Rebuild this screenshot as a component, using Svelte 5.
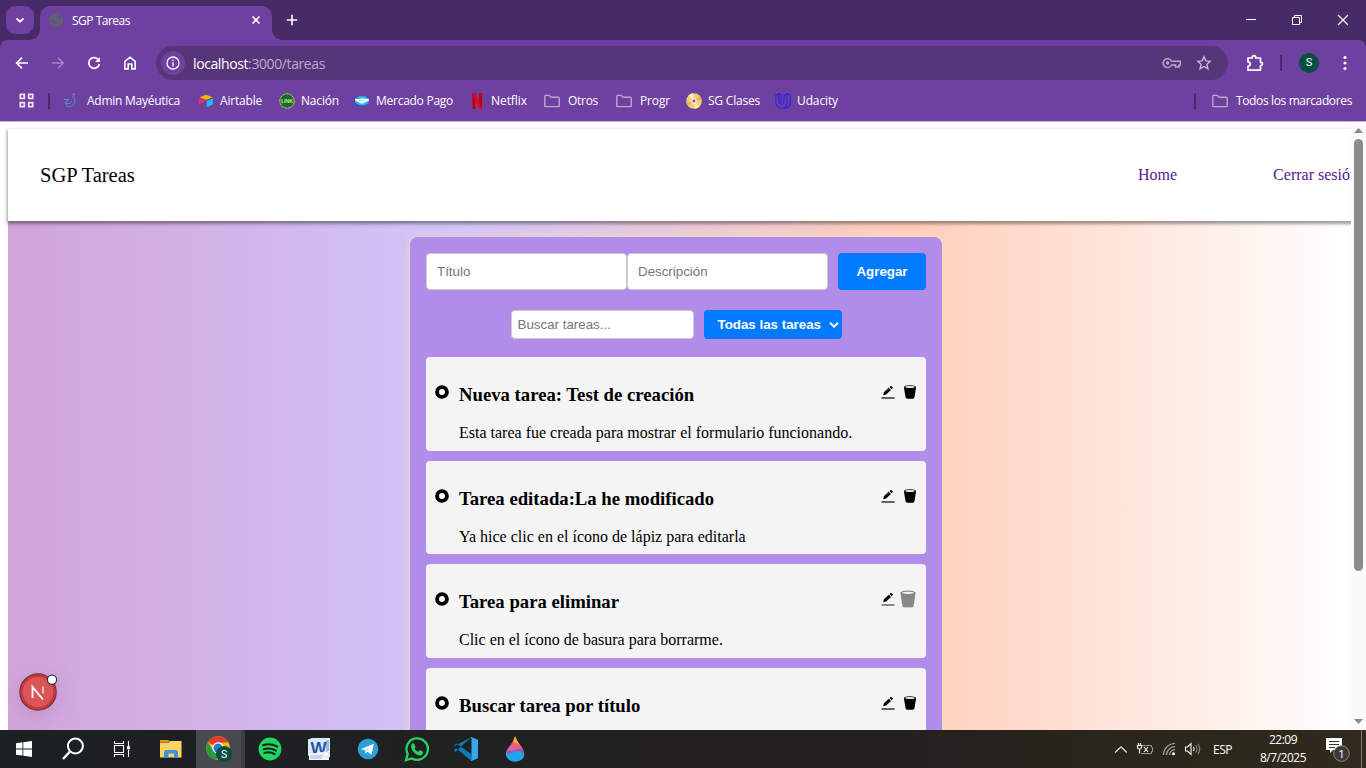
<script>
  const bookmarks = [
    { id: 'admin', label: 'Admin Mayéutica', w: 135, tw: 93 },
    { id: 'airtable', label: 'Airtable', w: 81, tw: 42 },
    { id: 'link', label: 'Nación', w: 75, tw: 38 },
    { id: 'mp', label: 'Mercado Pago', w: 115, tw: 77 },
    { id: 'netflix', label: 'Netflix', w: 75, tw: 36 },
    { id: 'folder', label: 'Otros', w: 72, tw: 30 },
    { id: 'folder', label: 'Progr', w: 70, tw: 30 },
    { id: 'disc', label: 'SG Clases', w: 89, tw: 52 },
    { id: 'udacity', label: 'Udacity', w: 70, tw: 41 }
  ];
  const tasks = [
    { title: 'Nueva tarea: Test de creación', text: 'Esta tarea fue creada para mostrar el formulario funcionando.' },
    { title: 'Tarea editada:La he modificado', text: 'Ya hice clic en el ícono de lápiz para editarla' },
    { title: 'Tarea para eliminar', text: 'Clic en el ícono de basura para borrarme.', hover: true },
    { title: 'Buscar tarea por título', text: 'Usá la barra de búsqueda.' }
  ];
  // Shrinks or widens the tracking so that a label takes exactly its slot.
  function fit(node, width) {
    const n = node.textContent.length;
    const natural = node.getBoundingClientRect().width;
    node.style.letterSpacing = (width - natural) / n + 'px';
  }
</script>

{#snippet folder()}
  <svg width="16" height="16" viewBox="0 0 16 16" fill="none" stroke="#b9a8c9" stroke-width="1.4"><path d="M.8 12.8V3.2q0-.8.8-.8h3.7l1.9 1.9h7.1q.9 0 .9.9v7.6q0 .8-.8.8H1.6q-.8 0-.8-.9z" /></svg>
{/snippet}

{#snippet bookmarkIcon(id)}
  {#if id === 'folder'}
    {@render folder()}
  {:else if id === 'admin'}
    <svg width="16" height="16" viewBox="0 0 16 16" fill="none"><path d="M1 6.5l4.7.2-3.4 3.8q1.7 4.7 6.2 2.8Q14 10 10.500 3.500M10 4l.4-3.500 2 1M2 10.700l5-.3 2-2.500" stroke="#5d8fd0" stroke-width="1" /><path d="M4 14.500q9 2.500 10.500-8" stroke="#584fa5" stroke-width="1" /></svg>
  {:else if id === 'airtable'}
    <svg width="16" height="16" viewBox="0 0 16 16"><path d="M1.500 4.300L8 1.800l6.700 2.500L8 6.900z" fill="#fcb400" /><path d="M8.700 8l6.200-2.400v6L8.700 14z" fill="#18bfff" /><path d="M1 5.500L7.300 8 1 12z" fill="#f82b60" /></svg>
  {:else if id === 'link'}
    <svg width="16" height="16" viewBox="0 0 16 16"><circle cx="8" cy="8" r="7.200" fill="#086b4c" stroke="#c2cf28" stroke-dasharray="3 .6" /><text x="8" y="10.200" text-anchor="middle" font-family="Liberation Sans" font-weight="bold" font-size="5.500" fill="#e0df27" textLength="12">LINK</text></svg>
  {:else if id === 'mp'}
    <svg width="16" height="16" viewBox="0 0 16 16"><ellipse cx="8" cy="8" rx="7.600" ry="5.300" fill="#1268b8" /><ellipse cx="8" cy="7.700" rx="7.100" ry="4.700" fill="#25b5f1" /><path d="M1 5.700q3.500 1 7-.4 3.500 1.400 7 .4l-.5 2.200q-2.700.4-4.300 2-2.200 1.300-4.400 0Q4.200 8.300 1.400 7.900z" fill="#fff" /><path d="M5 8l3-1 3 2" fill="none" stroke="#a9c9df" stroke-width=".7" /></svg>
  {:else if id === 'netflix'}
    <svg width="16" height="16" viewBox="0 0 16 16"><path d="M3.500 0h3v16h-3zM10 0h3v16h-3z" fill="#b20710" /><path d="M3.500 0h3L13 16h-3z" fill="#e50914" /></svg>
  {:else if id === 'disc'}
    <svg width="16" height="16" viewBox="0 0 16 16"><circle cx="8" cy="8" r="7.800" fill="#f7cb76" /><path d="M8 8L2.500 2.500A7.800 7.800 0 017 .3zM8 8l5.500 5.500a7.800 7.800 0 01-4.500 2.200z" fill="#fff0b9" /><path d="M8 8L.4 10A7.800 7.800 0 002 13zM8 8l7.600-2A7.800 7.800 0 0014 3z" fill="#f0ad48" /><circle cx="8" cy="8" r="2.700" fill="#fff1d4" /><circle cx="8" cy="8" r="1.400" fill="#7348a0" /></svg>
  {:else}
    <svg width="16" height="16" viewBox="0 0 16 16" fill="none" stroke="#2820ef" stroke-width="1.100"><path d="M.8 2.500L4 .7v7.600q0 3 2.600 3 1.900 0 2.400-2V2.500L12 .7l3.300 1.500v7.300q0 6-7.200 6Q.8 14.500.8 9.500zM12 .7v9q0 3.500-3.600 5.600M4 .7L6 2v7.500" /></svg>
  {/if}
{/snippet}

<div class="screen">
  <div class="tabstrip">
    <div class="tabsearch"><svg width="12" height="12" viewBox="0 0 12 12" fill="none" stroke="#fff" stroke-width="1.800"><path d="M2.500 4.300L6 7.700l3.500-3.400" /></svg></div>
    <div class="tab">
      <svg class="globe" width="14" height="14" viewBox="0 0 14 14"><circle cx="7" cy="7" r="6.900" fill="#5f6469" /><path d="M2 6q2 .1 3 1.200 1.100.5 2.100.3 1.300.4.8 1.700-.9.600-1.100 1.600-.5 1.200-1.700 1Q1.800 10.500 2 6zM6.700 1.800q-.1 1.900 1.500 1.600.2 1.700 2 1.800l.7 1.100 1.400.3q.1-3.100-2.300-4.500-1.600-.8-3.300-.3z" fill="#6f42a3" /></svg>
      <span class="tabtitle" use:fit={58}>SGP Tareas</span>
      <svg class="close" width="10" height="10" viewBox="0 0 10 10" stroke="#fff" stroke-width="1.600"><path d="M1.500 1.500l7 7M8.500 1.500l-7 7" /></svg>
    </div>
    <svg class="plus" width="12" height="12" viewBox="0 0 12 12" stroke="#fff" stroke-width="1.600"><path d="M6 .8v10.400M.8 6h10.400" /></svg>
    <div class="winctl">
      <svg width="12" height="12" viewBox="0 0 12 12" stroke="#fff"><path d="M1 5.500h10" /></svg>
      <svg width="12" height="12" viewBox="0 0 12 12" fill="none" stroke="#fff"><path d="M1.500 3.500h7v7h-7zM3.500 3.500v-2h7v7h-2" /></svg>
      <svg width="12" height="12" viewBox="0 0 12 12" stroke="#fff" stroke-width="1.200"><path d="M1 1l10 10M11 1L1 11" /></svg>
    </div>
  </div>

  <div class="toolbar">
    <div class="navs">
      <svg width="16" height="16" viewBox="0 0 16 16" fill="none" stroke="#fff" stroke-width="1.700"><path d="M14 8H3M8 2.700L2.700 8 8 13.300" /></svg>
      <svg width="16" height="16" viewBox="0 0 16 16" fill="none" stroke="#a283c4" stroke-width="1.500"><path d="M2 8h11M8 2.700L13.300 8 8 13.300" /></svg>
      <svg width="16" height="16" viewBox="0 0 16 16" fill="none" stroke="#fff" stroke-width="1.800"><path d="M13.300 9a5.300 5.300 0 11-1.500-4.800" /><path d="M13.900 1.900v5H9z" fill="#fff" stroke="none" /></svg>
      <svg width="16" height="16" viewBox="0 0 16 16" fill="none" stroke="#fff" stroke-width="1.600"><path d="M2.800 6.500L8 2.200l5.200 4.300v7.400H9.800V9H6.200v4.900H2.800z" /></svg>
    </div>
    <div class="omnibox">
      <div class="info"><svg width="14" height="14" viewBox="0 0 14 14" fill="none" stroke="#fff" stroke-width="1.300"><circle cx="7" cy="7" r="6" /><path d="M7 6.200v4.200M7 3.500v1.400" /></svg></div>
      <span class="url" use:fit={132}><b>localhost</b>:3000/tareas</span>
      <svg class="key" width="20" height="14" viewBox="0 0 20 14" fill="none" stroke="#b6a7c6" stroke-width="1.500"><path d="M9.500 5.200A4.400 4.400 0 109.500 9h4v2h3.500V9H18.300V5.200z" /><circle cx="5.600" cy="7" r="1.700" fill="#b6a7c6" stroke="none" /></svg>
      <svg width="16" height="16" viewBox="0 0 16 16" fill="none" stroke="#c5b9d1" stroke-width="1.400"><path d="M8 1.700l1.850 4.200 4.500.4-3.400 3 1 4.500L8 11.450 4.050 13.800l1-4.500-3.400-3 4.500-.4z" /></svg>
    </div>
    <div class="tools">
      <svg width="18" height="18" viewBox="0 0 18 18"><path d="M2 4h4.300V3.300a1.700 1.700 0 013.400 0V4h4.800v4.300h.4a1.600 1.600 0 010 3.200h-.4v4.700H2v-4a2.200 2.200 0 000-4.400z" fill="none" stroke="#fff" stroke-width="1.700" stroke-linejoin="round" /></svg>
      <i class="sep"></i>
      <div class="avatar">S</div>
      <svg width="4" height="16" viewBox="0 0 4 16" fill="#fff"><circle cx="2" cy="2.500" r="1.600" /><circle cx="2" cy="8" r="1.600" /><circle cx="2" cy="13.500" r="1.600" /></svg>
    </div>
  </div>

  <div class="bookmarks">
    <svg width="15" height="15" viewBox="0 0 15 15" fill="none" stroke="#eee5f5" stroke-width="1.700"><path d="M1.300 1.300h4v4h-4zM9.700 1.300h4v4h-4zM1.300 9.700h4v4h-4zM9.700 9.700h4v4h-4z" /></svg>
    <i class="sep first"></i>
    {#each bookmarks as b}
      <div class="bm" class:fold={b.id === 'folder'} style="width:{b.w}px">{@render bookmarkIcon(b.id)}<span use:fit={b.tw}>{b.label}</span></div>
    {/each}
    <div class="allbm"><i class="sep"></i>{@render folder()}<span use:fit={116}>Todos los marcadores</span></div>
  </div>

  <div class="viewport">
    <div class="page">
      <header>
        <div class="brand">SGP Tareas</div>
        <nav><span>Home</span><span>Cerrar sesión</span></nav>
      </header>
      <main>
        <section class="card">
          <div class="form">
            <input placeholder="Título" /><input placeholder="Descripción" />
            <button>Agregar</button>
          </div>
          <div class="filters">
            <input placeholder="Buscar tareas..." />
            <div class="select"><span>Todas las tareas</span><svg width="10" height="8" viewBox="0 0 10 8" fill="none" stroke="#fff" stroke-width="2"><path d="M1 1.700l4 4 4-4" /></svg></div>
          </div>
          <div class="list">
            {#each tasks as t}
              <article>
                <svg class="ring" width="14" height="14" viewBox="0 0 14 14"><circle cx="7" cy="7" r="4.900" fill="#fff" stroke="#000" stroke-width="3.900" /></svg>
                <div class="body"><h3>{t.title}</h3><p>{t.text}</p></div>
                <div class="actions">
                  <svg width="14" height="14" viewBox="0 0 14 14"><path d="M2.200 10.300l.7-3 4.900-4.600 2.200 2.200-4.900 4.700zM8.500 2L10 .700l2 2-1.300 1.500z" /><path d="M.5 12.400h13v1.200H.5z" fill={t.hover ? '#444' : '#000'} /></svg>
                  <svg class="trash" class:hover={t.hover} width="14" height="14" viewBox="0 0 14 14"><path d="M.9 2.200C.9.900 3.500.2 7 .2s6.100.7 6.100 2l-1.600 9.900q-.2 1.700-1.700 1.700H4.200q-1.500 0-1.700-1.700z" /><ellipse cx="7" cy="2" rx="4.700" ry=".9" fill="#f4f4f4" /></svg>
                </div>
              </article>
            {/each}
          </div>
        </section>
      </main>
    </div>
    <div class="scroll">
      <svg width="9" height="5" viewBox="0 0 9 5"><path d="M0 5L4.500 0 9 5z" fill="#8b8b8b" /></svg>
      <div class="thumb"></div>
      <svg class="down" width="9" height="5" viewBox="0 0 9 5"><path d="M0 0l4.500 5L9 0z" fill="#8b8b8b" /></svg>
    </div>
    <div class="dev"><svg width="40" height="42" viewBox="0 0 40 42"><circle cx="19" cy="22" r="18.800" fill="#5c3b42" /><circle cx="19" cy="22" r="17.800" fill="#cc3439" /><circle cx="19" cy="22" r="15.200" fill="#d9555a" /><path d="M13.500 28V17L24 29.500" fill="none" stroke="#fff" stroke-width="1.800" /><path d="M24 16.500v7" stroke="#f6d6d8" stroke-width="1.600" /><circle cx="33" cy="9.700" r="4.600" fill="#fff" stroke="#333" stroke-width="1.200" /></svg></div>
  </div>

  <div class="taskbar">
    <div class="tb"><svg width="16" height="16" viewBox="0 0 16 16" fill="#fff"><path d="M0 2.200l6.500-.9v6.200H0zM7.300 1.200L16 0v7.500H7.300zM0 8.400h6.500v6.200L0 13.700zM7.300 8.400H16V16l-8.700-1.200z" /></svg></div>
    <div class="tb"><svg width="24" height="24" viewBox="0 0 24 24" fill="none" stroke="#fff" stroke-width="2"><circle cx="14.400" cy="9" r="7.500" /><path d="M9 14.500L2 22" stroke-width="2.400" /></svg></div>
    <div class="tb"><svg width="18" height="16" viewBox="0 0 18 16" fill="none" stroke="#fff" stroke-width="1.100"><path d="M1.500 0v2.500h9V0M1.500 4.500h9v7h-9zM1.500 16v-2.500h9V16M15.500 0v5M15.500 8.500V16" /><path d="M14 5.200h3v3h-3z" fill="#fff" stroke="none" /></svg></div>
    <div class="tb wide"><svg width="22" height="18" viewBox="0 0 22 18"><path d="M0 0h8.500l1.500 2H0z" fill="#d99a14" /><path d="M0 2.500h9L10 1h11.500v16.500H0z" fill="#fcd462" /><path d="M4 18v-6.500l1.500-1.500h11L18 11.500V18h-4v-4.500H8.500V18z" fill="#3d93d5" /></svg></div>
    <div class="tb active"><svg width="26" height="26" viewBox="0 0 26 26"><circle cx="12" cy="12" r="11.800" fill="#fbc112" /><path d="M12 12L1.800 6A11.800 11.800 0 0122.300 6.500H12z" fill="#e33b2e" /><path d="M1.800 6A11.800 11.800 0 0010.500 23.700L16.700 14.700 7 14.500z" fill="#269b47" /><circle cx="12" cy="12" r="5.700" fill="#fff" /><circle cx="12" cy="12" r="4.500" fill="#2878e8" /><circle cx="18" cy="18" r="8" fill="#064e40" /><text x="18" y="22" text-anchor="middle" font-family="Roboto" font-size="10.500" fill="#fff">S</text></svg></div>
    <div class="tb"><svg width="24" height="24" viewBox="0 0 24 24"><circle cx="12" cy="12" r="11.400" fill="#1ed760" /><path d="M5 8.200q7.500-2.200 14.300 1.400M5.700 12.200q6.500-1.800 12.300 1.400M6.300 15.900q5.500-1.500 10.400 1.200" fill="none" stroke="#18221b" stroke-width="2" stroke-linecap="round" /></svg></div>
    <div class="tb"><svg width="22" height="22" viewBox="0 0 22 22"><path d="M0 1.500L4 0h18v19H4l-4-1.500z" fill="#dfe8f5" /><path d="M18 2h3v16h-3z" fill="#a4b8d9" /><text x="10.500" y="15.500" text-anchor="middle" font-family="Liberation Sans" font-weight="bold" font-size="17" fill="#1d59a8">W</text><path d="M1 16l20-3v9H1z" fill="#f3f6fb" /><path d="M2 18h12M2 20h12" stroke="#9eb5d6" /><path d="M16 13l5.500 2-3 4.500-4-2z" fill="#fff" stroke="#b3c4dc" stroke-width=".6" /></svg></div>
    <div class="tb"><svg width="22" height="22" viewBox="0 0 22 22"><circle cx="11" cy="11" r="10.300" fill="#2b9fd9" /><path d="M4 11L16.800 5.700l-2.200 11-4.300-3-2 2-.4-3.500z" fill="#fff" /><path d="M8.200 12.300l6.600-4.500-4.800 5-1.700 2.600z" fill="#b9dcef" /></svg></div>
    <div class="tb"><svg width="26" height="26" viewBox="0 0 26 26"><path d="M2 24l1.700-6A10.700 10.700 0 118 22.400z" fill="none" stroke="#25d366" stroke-width="2.300" /><path d="M8.200 7.500l1.700-.2 1.700 3.600-1.200 1.600q1.300 2.400 3.900 3.300l1.500-1.700 3.300 1.600q0 3.500-3.600 3.700-4.700-.6-7.700-5.800Q6.300 10 8.200 7.500z" fill="#25d366" /></svg></div>
    <div class="tb"><svg width="24" height="24" viewBox="0 0 24 24"><path d="M17.500 0L1.200 15l-1-1.200v-1L2 11l15.500 13v-6.700L2.300 6.500.2 8.200v1z" fill="#0879bd" /><path d="M17.500 0L24 2.800v18.400L17.500 24l-1-.8q1 .1 1-1V2q0-1.200-1-1.100z" fill="#35a7ed" /></svg></div>
    <div class="tb"><svg width="20" height="26" viewBox="0 0 20 26"><path d="M10.200.5Q12 6 16.500 11q6 9-.5 13-6 3.500-12 0-6.500-5 0-13Q8.500 6.500 10.200.5z" fill="#1ba7ea" /><path d="M10.200.5Q12 6 16.500 11q3 4.500 2.300 8Q14 13 9 16q-5 3.500-7.700.5Q1 14.500 4 11 8.500 6.500 10.200.5z" fill="#9459bd" /><path d="M10.200.5Q12 6 16.500 11l1.500 3q-5-2-9 0-4 2-6.800-.2Q8.500 7 10.200.5z" fill="#ee5c87" /><path d="M10.200.5Q12 6 14.500 8.500 9 7 8 5z" fill="#ffb000" /></svg></div>
    <div class="tray">
      <svg width="14" height="9" viewBox="0 0 14 9" fill="none" stroke="#e9e9e9" stroke-width="1.200"><path d="M1.200 7.500L7 1.800l5.800 5.700" /></svg>
      <svg width="18" height="14" viewBox="0 0 18 14" fill="none" stroke="#eee"><path d="M1.500 3.500h4v2q0 1.500-2 1.500t-2-1.500zM2.500 1v2.500M4.500 1v2.500M3.500 7v4.500M8 5l4 5M12 5l-4 5" stroke-width="1.200" /><path d="M6 3.500h9.500v2h1v4h-1v2H5" stroke="#999" /></svg>
      <svg width="14" height="14" viewBox="0 0 14 14" fill="none" stroke="#aaa" stroke-width="1.200"><path d="M1.500 13A11.500 11.500 0 0113 1.500M4.500 13A8.500 8.500 0 0113 4.700M7.500 13A5.500 5.500 0 0113 7.600" /><circle cx="11.500" cy="11.800" r="1.500" fill="#fff" stroke="none" /></svg>
      <svg width="18" height="14" viewBox="0 0 18 14" fill="none" stroke="#fff" stroke-width="1.100"><path d="M1.500 5h2L7 1.500v11L3.500 9h-2z" /><path d="M9.500 5q1.200 2 0 4" /><path d="M11.700 3.300q2.500 3.700 0 7.400M14 1.800q3.500 5.200 0 10.400" stroke="#888" /></svg>
      <span class="esp" use:fit={19}>ESP</span>
      <div class="clock"><span use:fit={28}>22:09</span><span use:fit={46}>8/7/2025</span></div>
      <svg class="notif" width="26" height="26" viewBox="0 0 26 26"><path d="M1 2h16v12H8l-3 3v-3H1z" fill="#fff" /><path d="M4 5.500h10M4 8.500h10M4 11.500h6" stroke="#333" stroke-width="1.200" /><circle cx="16.500" cy="17.500" r="7.800" fill="#3b3b3b" stroke="#8a8a8a" /><text x="16.500" y="21.700" text-anchor="middle" font-family="Open Sans" font-size="11.500" fill="#fff">1</text></svg>
    </div>
    <i class="peek"></i>
  </div>
</div>

<style>
  :global(body) { margin: 0; overflow: hidden; }
  .screen { width: 1366px; height: 768px; display: flex; flex-direction: column; overflow: hidden; background: #fff; font-family: "Open Sans", "Noto Sans", sans-serif; font-size: 12px; color: #fff; }
  .screen :global(*) { box-sizing: border-box; }
  svg { display: block; flex: none; }
  span { white-space: nowrap; }
  .tabstrip { height: 40px; flex: none; background: #472b66; display: flex; align-items: center; padding-left: 6px; }
  .tabsearch { width: 28px; height: 28px; border-radius: 9px; background: #6e41a1; display: grid; place-items: center; }
  .tab { position: relative; margin: 6px 0 0 6px; width: 232px; height: 34px; background: #6e41a1; border-radius: 10px 10px 0 0; display: flex; align-items: center; padding: 0 11px 6px 9px; }
  .tab::before, .tab::after { content: ""; position: absolute; bottom: 0; width: 10px; height: 10px; }
  .tab::before { left: -10px; background: radial-gradient(circle at 0 0, #472b66 9.500px, #6e41a1 10px); }
  .tab::after { right: -10px; background: radial-gradient(circle at 100% 0, #472b66 9.500px, #6e41a1 10px); }
  .tabtitle { margin-left: 9px; }
  .close { margin-left: auto; }
  .plus { margin-left: 14px; }
  .winctl { margin-left: auto; display: flex; gap: 34px; padding-right: 17px; }
  .toolbar { height: 46px; flex: none; background: linear-gradient(#472b66, #472b66) 0 0 / 100% 8px no-repeat, #6e41a1; display: flex; align-items: center; position: relative; }
  .toolbar::before { content: ""; position: absolute; inset: 0; background: #6e41a1; border-radius: 8px 8px 0 0; }
  .toolbar > * { position: relative; }
  .navs { display: flex; gap: 20px; padding-left: 14px; width: 156px; }
  .omnibox { width: 1072px; height: 34px; border-radius: 17px; background: #563579; display: flex; align-items: center; padding: 0 16px 0 5px; }
  .info { width: 24px; height: 24px; border-radius: 50%; background: #6e41a1; display: grid; place-items: center; margin-right: 8px; }
  .url { font-size: 14px; color: #bba8cf; }
  .url b { font-weight: 400; color: #fff; }
  .key { margin: 0 14px 0 auto; }
  .tools { flex: 1; display: flex; align-items: center; padding-left: 18px; }
  .sep { width: 2px; height: 16px; background: #4b2c6b; }
  .tools .sep { margin: 0 17px 0 16px; }
  .avatar { width: 20px; height: 20px; border-radius: 50%; background: #064e40; font: 11px/20px Roboto, sans-serif; text-align: center; margin-right: 24px; }
  .bookmarks { height: 36px; flex: none; background: #6e41a1; border-bottom: 1px solid #c7b2dc; display: flex; align-items: center; padding: 0 14px 6px 19px; }
  .bookmarks .first { margin: 0 13px 0 14px; }
  .bm { display: flex; align-items: center; gap: 6px; flex: none; }
  .bm:nth-of-type(1) { gap: 8px; }
  .bm.fold { gap: 8px; }
  .allbm { margin-left: auto; display: flex; align-items: center; gap: 8px; }
  .allbm .sep { margin-right: 8px; }
  .viewport { height: 608px; flex: none; position: relative; display: flex; overflow: hidden; }
  .page { width: 1351px; padding: 7px 0 0 8px; overflow: hidden; flex: none; font-family: "Liberation Serif", serif; color: #000; }
  header { position: relative; width: 1400px; height: 92px; background: #fff; box-shadow: 0 0 3px 2px rgba(0,0,0,.0), 0 2px 3px 1px rgba(0,0,0,.38); padding: 0 32px; display: flex; align-items: center; }
  .brand { font-size: 20.500px; width: 1098px; }
  nav { display: flex; gap: 96px; color: #551a8b; font-size: 16px; white-space: nowrap; }
  main { width: 1343px; height: 600px; background: linear-gradient(90deg, #d1a5d9, #d2c4fa 33%, #ffcdb9 66.600%, #fff); padding: 16px 0 0 402px; }
  .card { width: 532px; height: 600px; border-radius: 8px; padding: 16px; background: #b28ce9; box-shadow: 0 0 10px rgba(240,230,190,.8); }
  .form { display: flex; }
  input { font: 13.333px "Liberation Sans", Arial, sans-serif; border: 1px solid #ccc; border-radius: 4px; outline: 0; background: #fff; }
  input::placeholder { color: #757575; }
  .form input { width: 201px; height: 37px; padding: 0 10px; }
  button { width: 88px; height: 37px; margin-left: 10px; border: 0; border-radius: 4px; background: #007bff; color: #fff; font: bold 13.333px "Liberation Sans", Arial, sans-serif; padding: 0; }
  .filters { display: flex; justify-content: center; gap: 10px; margin-top: 20px; }
  .filters input { width: 183px; height: 29px; padding: 0 6px; }
  .select { width: 138px; height: 29px; border-radius: 4px; background: #007bff; color: #fff; font: bold 13.333px "Liberation Sans", Arial, sans-serif; display: flex; align-items: center; justify-content: space-between; padding: 0 3px 0 14px; }
  .list { display: flex; flex-direction: column; gap: 10px; margin-top: 18px; }
  article { height: 93.600px; flex: none; border-radius: 4px; background: #f4f4f4; display: flex; align-items: flex-start; padding-left: 9px; }
  .ring { margin-top: 28px; }
  .body { margin-left: 10px; flex: 1; }
  h3 { margin: 27px 0 0; font-size: 18.720px; line-height: 22px; }
  p { margin: 18px 0 0; font-size: 16px; line-height: 18px; white-space: nowrap; }
  .actions { display: flex; gap: 8px; padding: 28px 9px 0 0; }
  .hover { transform: scale(1.250); fill: #888; translate: -2px 0; }
  .scroll { width: 15px; background: #fbfbfb; display: flex; flex-direction: column; align-items: center; padding: 6px 0; }
  .thumb { width: 9px; height: 432px; border-radius: 5px; background: #8b8b8b; margin-top: 6px; }
  .down { margin-top: auto; }
  .dev { position: absolute; left: 19px; top: 548px; border-radius: 50%; filter: drop-shadow(0 5px 10px rgba(80,0,80,.13)); }
  .taskbar { height: 38px; flex: none; background: linear-gradient(90deg, #1b2023, #202121 35%, #251f20 65%, #29251b 80%, #302b1c); display: flex; align-items: center; }
  .tb { width: 49px; height: 38px; display: grid; place-items: center; flex: none; }
  .tb:first-child { width: 48px; }
  .tb.wide { width: 50px; }
  .tb.active { background: #474b4d; border-right: 4px solid #3a3e40; }
  .tray { margin-left: auto; display: flex; align-items: center; gap: 8px; height: 38px; }
  .esp { margin-left: 3px; }
  .clock { width: 60px; margin-left: 13px; display: flex; flex-direction: column; align-items: center; line-height: 18px; }
  .notif { margin-left: 4px; }
  .peek { width: 1px; height: 38px; background: #817d70; margin: 0 4px 0 10px; }
</style>
